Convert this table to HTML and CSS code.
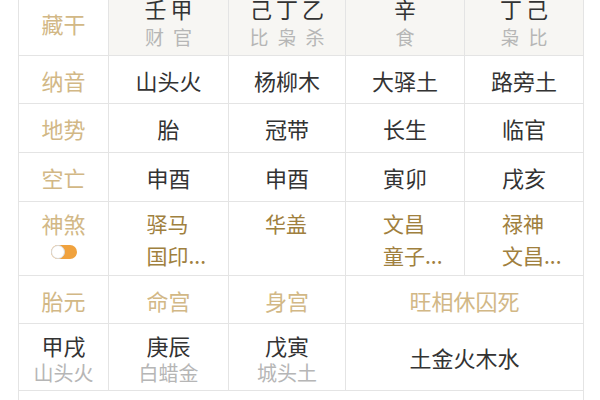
FILE: index.html
```html
<!DOCTYPE html>
<html lang="zh">
<head>
<meta charset="utf-8">
<link rel="stylesheet" href="styles.css">
</head>
<body>
<table class="chart">
  <colgroup>
    <col class="c-label"><col class="c-a"><col class="c-b"><col class="c-c"><col class="c-d">
  </colgroup>
  <tr class="r-cang">
    <td class="label">藏干</td>
    <td class="tint"><div class="main sp">壬甲</div><div class="sub wide">财官</div></td>
    <td class="tint"><div class="main sp">己丁乙</div><div class="sub wide">比枭杀</div></td>
    <td class="tint"><div class="main">辛</div><div class="sub">食</div></td>
    <td class="tint"><div class="main sp">丁己</div><div class="sub wide">枭比</div></td>
  </tr>
  <tr class="r-std">
    <td class="label">纳音</td>
    <td class="main">山头火</td><td class="main">杨柳木</td><td class="main">大驿土</td><td class="main">路旁土</td>
  </tr>
  <tr class="r-std r-tall">
    <td class="label">地势</td>
    <td class="main">胎</td><td class="main">冠带</td><td class="main">长生</td><td class="main">临官</td>
  </tr>
  <tr class="r-std r-tall">
    <td class="label">空亡</td>
    <td class="main">申酉</td><td class="main">申酉</td><td class="main">寅卯</td><td class="main">戌亥</td>
  </tr>
  <tr class="r-shen">
    <td class="label top"><div class="lbl-line">神煞</div><span class="toggle"><span class="knob"></span></span></td>
    <td class="gods"><div class="god">驿马</div><div class="god">国印...</div></td>
    <td class="gods"><div class="god">华盖</div></td>
    <td class="gods"><div class="god">文昌</div><div class="god">童子...</div></td>
    <td class="gods"><div class="god">禄神</div><div class="god">文昌...</div></td>
  </tr>
  <tr class="r-std">
    <td class="label">胎元</td>
    <td class="label">命宫</td>
    <td class="label">身宫</td>
    <td class="label" colspan="2">旺相休囚死</td>
  </tr>
  <tr class="r-pal">
    <td class="pal"><div class="main">甲戌</div><div class="sub">山头火</div></td>
    <td class="pal"><div class="main">庚辰</div><div class="sub">白蜡金</div></td>
    <td class="pal"><div class="main">戊寅</div><div class="sub">城头土</div></td>
    <td class="main" colspan="2">土金火木水</td>
  </tr>
  <tr class="r-last">
    <td colspan="5"></td>
  </tr>
</table>
</body>
</html>
```

FILE: styles.css
```css
html, body {
  margin: 0;
  padding: 0;
  background: #ffffff;
}
body {
  font-family: "Noto Sans CJK SC", "Noto Sans", sans-serif;
  overflow: hidden;
}
.chart {
  border-collapse: collapse;
  table-layout: fixed;
  margin: -11px 0 0 18px;
  width: 566px;
}
.c-label { width: 90px; }
.c-a { width: 120px; }
.c-b { width: 117px; }
.c-c { width: 119px; }
.c-d { width: 119px; }

.chart td {
  border: 1px solid #e4e4e4;
  padding: 0;
  text-align: center;
  vertical-align: middle;
  color: #333333;
}
.chart td.tint { background: #f7f6f3; }

.r-cang { height: 66px; }
.r-std { height: 48px; }
.r-tall { height: 49px; }
.r-shen { height: 74px; }
.r-pal { height: 67px; }
.r-last { height: 30px; }

.label {
  font-size: 22px;
  color: #d2b886;
}
.chart td.label { color: #d2b886; }
.main {
  font-size: 22px;
  line-height: 28px;
  color: #333333;
}
.sp { letter-spacing: 4px; text-indent: 4px; }
.sub {
  font-size: 19px;
  line-height: 28px;
  color: #b6b6b6;
}
.wide { letter-spacing: 9px; text-indent: 9px; }
.r-cang .sub { margin-top: 1px; }
.chart td.pal { padding-top: 4px; }
.pal .sub { font-size: 20px; }

.chart td.top,
.chart td.gods { vertical-align: top; padding-top: 5px; }
.lbl-line {
  line-height: 32px;
  font-size: 22px;
}
.toggle {
  display: block;
  width: 26px;
  height: 14px;
  margin: 6px auto 0;
  border-radius: 7px;
  background: #f0a23e;
  position: relative;
}
.knob {
  position: absolute;
  left: 0;
  top: 0;
  width: 12px;
  height: 12px;
  border-radius: 50%;
  background: #ffffff;
  border: 1px solid #d8d8d8;
}
.god {
  width: 44px;
  margin: 0 auto;
  text-align: left;
  white-space: nowrap;
  font-size: 21px;
  line-height: 32px;
  color: #a0803e;
}
```
